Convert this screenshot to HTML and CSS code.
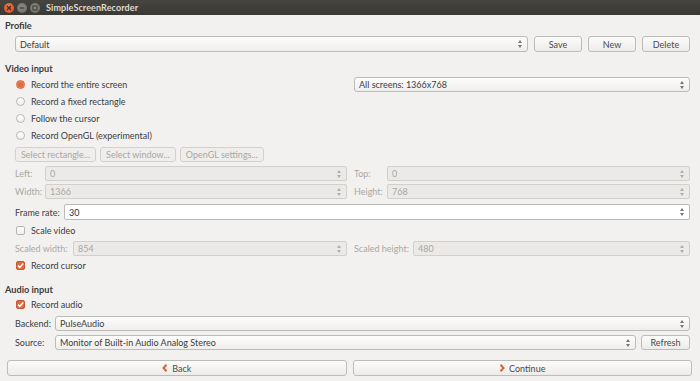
FILE: index.html
```html
<!DOCTYPE html>
<html>
<head>
<meta charset="utf-8">
<link rel="stylesheet" href="styles.css">
</head>
<body>
<div class="titlebar">
  <div class="wbtns">
    <span class="wb close"><svg width="8" height="8" viewBox="0 0 8 8"><path d="M2 2L6 6M6 2L2 6" stroke="#3a2a22" stroke-width="1.2"/></svg></span>
    <span class="wb grey"><svg width="8" height="8" viewBox="0 0 8 8"><path d="M2 4H6" stroke="#3c3b37" stroke-width="1.2"/></svg></span>
    <span class="wb grey"><svg width="8" height="8" viewBox="0 0 8 8"><rect x="2" y="2" width="4" height="4" fill="none" stroke="#3c3b37" stroke-width="1"/></svg></span>
  </div>
  <span class="title">SimpleScreenRecorder</span>
</div>

<div class="content">
  <div class="heading h-profile">Profile</div>
  <div class="row r-profile">
    <div class="combo grow"><span>Default</span><i class="arr"></i></div>
    <div class="btn small">Save</div>
    <div class="btn small">New</div>
    <div class="btn small">Delete</div>
  </div>

  <div class="heading h-video">Video input</div>
  <div class="radios">
    <div class="rrow">
      <div class="opt col"><span class="radio on"></span>Record the entire screen</div>
      <div class="col right"><div class="combo full"><span>All screens: 1366x768</span><i class="arr"></i></div></div>
    </div>
    <div class="rrow"><div class="opt"><span class="radio"></span>Record a fixed rectangle</div></div>
    <div class="rrow"><div class="opt"><span class="radio"></span>Follow the cursor</div></div>
    <div class="rrow"><div class="opt"><span class="radio"></span>Record OpenGL (experimental)</div></div>
  </div>
  <div class="row r-sel">
    <div class="btn dis">Select rectangle...</div>
    <div class="btn dis">Select window...</div>
    <div class="btn dis">OpenGL settings...</div>
  </div>

  <div class="row two r-left">
    <div class="col"><span class="lbl dis w30">Left:</span><div class="field dis"><span>0</span><i class="spin"></i></div></div>
    <div class="col right"><span class="lbl dis w33">Top:</span><div class="field dis"><span>0</span><i class="spin"></i></div></div>
  </div>
  <div class="row two r-width">
    <div class="col"><span class="lbl dis w30">Width:</span><div class="field dis"><span>1366</span><i class="spin"></i></div></div>
    <div class="col right"><span class="lbl dis w33">Height:</span><div class="field dis"><span>768</span><i class="spin"></i></div></div>
  </div>
  <div class="row r-fps">
    <span class="lbl w49">Frame rate:</span><div class="field on"><span>30</span><i class="spin"></i></div>
  </div>
  <div class="row r-check"><div class="opt"><span class="cbox"></span>Scale video</div></div>
  <div class="row two r-scaled">
    <div class="col"><span class="lbl dis w58">Scaled width:</span><div class="field dis"><span>854</span><i class="spin"></i></div></div>
    <div class="col right"><span class="lbl dis w59">Scaled height:</span><div class="field dis"><span>480</span><i class="spin"></i></div></div>
  </div>
  <div class="row r-check r-cursor"><div class="opt"><span class="cbox on"><svg width="9" height="9" viewBox="0 0 9 9"><path d="M2 4.6L3.8 6.4L7.2 2.4" fill="none" stroke="#fff" stroke-width="1.5"/></svg></span>Record cursor</div></div>

  <div class="heading h-audio">Audio input</div>
  <div class="row r-check2"><div class="opt"><span class="cbox on"><svg width="9" height="9" viewBox="0 0 9 9"><path d="M2 4.6L3.8 6.4L7.2 2.4" fill="none" stroke="#fff" stroke-width="1.5"/></svg></span>Record audio</div></div>
  <div class="row r-backend">
    <span class="lbl w40">Backend:</span><div class="combo grow"><span>PulseAudio</span><i class="arr"></i></div>
  </div>
  <div class="row r-source">
    <span class="lbl w40">Source:</span><div class="combo grow"><span>Monitor of Built-in Audio Analog Stereo</span><i class="arr"></i></div>
    <div class="btn refresh">Refresh</div>
  </div>
</div>

<div class="row r-nav">
  <div class="btn nav"><svg width="6" height="8" viewBox="0 0 6 8"><path d="M4.5 0.8L1.5 4L4.5 7.2" fill="none" stroke="#e0642a" stroke-width="2"/></svg>Back</div>
  <div class="btn nav"><svg width="6" height="8" viewBox="0 0 6 8"><path d="M1.5 0.8L4.5 4L1.5 7.2" fill="none" stroke="#e0642a" stroke-width="2"/></svg>Continue</div>
</div>
</body>
</html>
```
FILE: styles.css
```css
* { box-sizing: border-box; }
html, body { margin: 0; padding: 0; }
body {
  width: 700px;
  height: 381px;
  overflow: hidden;
  background: #f2f1f0;
  font-family: "Lato", "Open Sans", sans-serif;
  font-size: 9px;
  color: #3c3c3c;
}
.titlebar {
  height: 15px;
  background: linear-gradient(#45443f, #3a3935);
  display: flex;
  align-items: center;
  padding-left: 4px;
}
.wbtns { display: flex; gap: 3px; }
.wb {
  width: 10px; height: 10px; border-radius: 50%;
  display: flex; align-items: center; justify-content: center;
}
.wb svg { width: 8px; height: 8px; }
.wb.close { background: radial-gradient(circle at 50% 40%, #f27a4f, #d9491c); }
.wb.grey { background: radial-gradient(circle at 50% 40%, #8c8a85, #6a6964); }
.title {
  margin-left: 6px;
  color: #dfdbd2;
  font-weight: bold;
  font-size: 9px;
  letter-spacing: 0.1px;
}
.content { padding: 0 10px 0 15px; }
.heading {
  font-weight: bold;
  height: 12px;
  line-height: 12px;
  margin-left: -10px;
  font-size: 9.2px;
}
.h-profile { margin-top: 5px; }
.h-video { margin-top: 11px; }
.h-audio { margin-top: 11px; }
.row { display: flex; align-items: center; }
.r-profile { height: 16px; margin-top: 4px; gap: 6px; }
.grow { flex: 1; }
.combo {
  height: 100%;
  border: 1px solid #bdbbb7;
  border-radius: 3px;
  background: linear-gradient(#fdfdfd, #efeeec);
  display: flex;
  align-items: center;
  padding: 0 4px;
  justify-content: space-between;
}
.combo.full { height: 15px; width: 100%; }
.arr, .spin {
  width: 5px; height: 8px;
  position: relative;
  flex: none;
}
.arr::before, .arr::after, .spin::before, .spin::after {
  content: ""; position: absolute; left: 0;
  border-left: 2.5px solid transparent;
  border-right: 2.5px solid transparent;
}
.arr::before { top: 0; border-bottom: 3px solid #77756f; }
.arr::after { bottom: 0; border-top: 3px solid #77756f; }
.spin::before { top: 0; border-bottom: 3px solid #b0aea9; }
.spin::after { bottom: 0; border-top: 3px solid #b0aea9; }
.field.on .spin::before { border-bottom-color: #77756f; }
.field.on .spin::after { border-top-color: #77756f; }
.btn {
  height: 100%;
  border: 1px solid #bebcb8;
  border-radius: 3px;
  background: linear-gradient(#fbfbfa, #edecea);
  display: flex;
  align-items: center;
  justify-content: center;
  padding: 0 5px;
  color: #4a4a4a;
}
.btn.small { width: 48px; }
.btn.dis { color: #a9a7a3; border-color: #d3d1cd; background: #efeeec; }
.radios { margin-top: 1px; }
.rrow { height: 17px; display: flex; align-items: center; }
.opt { display: flex; align-items: center; }
.col { flex: 0 0 332px; display: flex; align-items: center; height: 100%; }
.col.right { flex: 1; margin-left: 7px; height: auto; }
.radio {
  width: 9px; height: 9px; border-radius: 50%;
  border: 1px solid #b8b6b2;
  background: linear-gradient(#fff, #f0efed);
  margin-right: 6px;
  margin-left: 1px;
}
.radio.on {
  border-color: #d5623a;
  background: radial-gradient(circle, #e8683c 0 2.6px, #f19672 3.4px);
}
.r-sel { height: 15px; margin-top: 3px; gap: 4px; }
.two { gap: 0; }
.r-left { height: 15px; margin-top: 4px; }
.r-width { height: 15px; margin-top: 3px; }
.two .col { height: 15px; }
.lbl { flex: none; }
.lbl.dis { color: #aaa8a4; }
.w30 { width: 30px; }
.w33 { width: 33px; }
.w40 { width: 40px; }
.w49 { width: 49px; }
.w58 { width: 58px; }
.w59 { width: 59px; }
.field {
  flex: 1;
  height: 100%;
  border: 1px solid #d2d0cc;
  border-radius: 2px;
  background: #ebeae8;
  display: flex;
  align-items: center;
  justify-content: space-between;
  padding: 0 4px;
  color: #a8a6a2;
}
.field.on { background: #fff; border-color: #bdbbb7; color: #333; }
.r-fps { height: 16px; margin-top: 5px; }
.r-check { height: 16px; margin-top: 2px; }
.r-cursor { margin-top: 1px; }
.r-check2 { height: 16px; margin-top: 0; }
.cbox {
  width: 9px; height: 9px;
  border: 1px solid #b8b6b2;
  border-radius: 2px;
  background: linear-gradient(#fff, #f0efed);
  margin-right: 6px;
  margin-left: 1px;
  display: flex; align-items: center; justify-content: center;
}
.cbox.on { background: #e2693e; border-color: #c9582f; }
.cbox svg { width: 9px; height: 9px; flex: none; }
.r-scaled { height: 15px; margin-top: 3px; }
.r-backend { height: 15px; margin-top: 4px; }
.r-source { height: 15px; margin-top: 4px; gap: 5px; }
.r-source .lbl { margin-right: -5px; }
.refresh { width: 49px; }
.r-nav { height: 16px; margin-top: 10px; padding: 0 8px 0 7px; gap: 6px; }
.btn.nav { flex: 1; gap: 4px; }
.btn.nav svg { flex: none; }
```
